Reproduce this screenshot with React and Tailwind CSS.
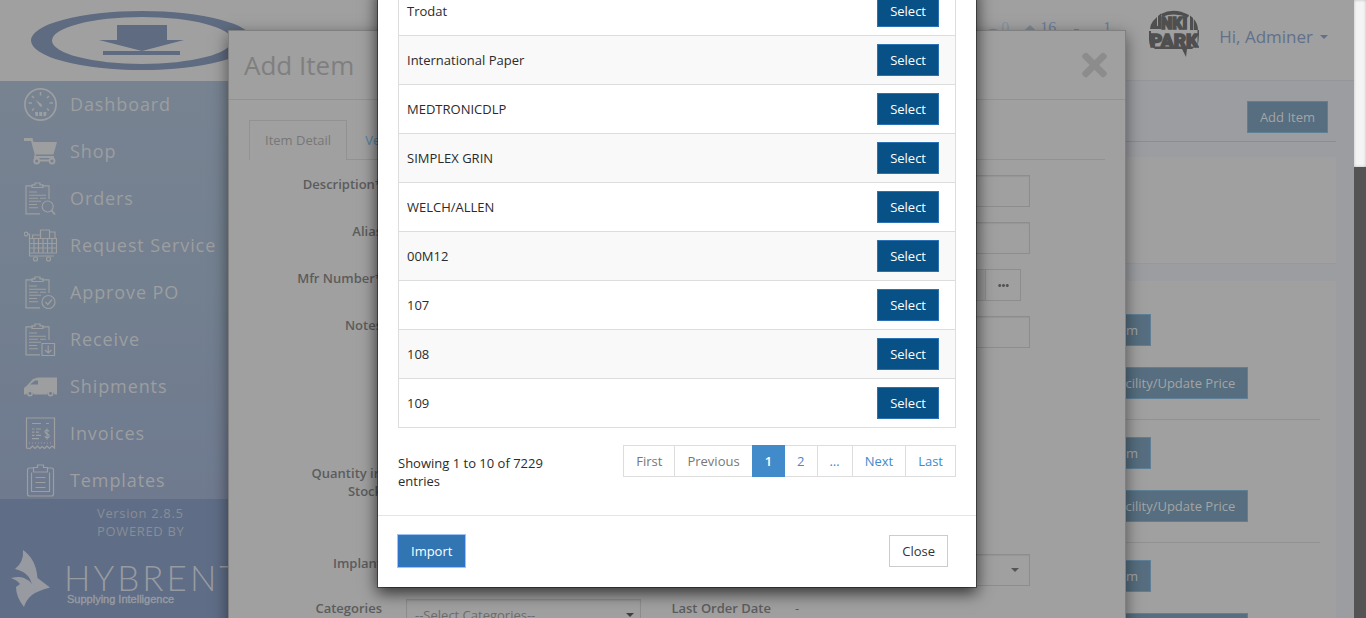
import React from "react";
import { FaTimes, FaEye, FaEllipsisH } from "react-icons/fa";

function Icon({ children }) {
  return (
    <svg
      viewBox="0 0 33 33"
      className="size-[33px] shrink-0"
      fill="none"
      stroke="currentColor"
      strokeWidth="1.2"
      aria-hidden="true"
    >
      {children}
    </svg>
  );
}

const DashboardIcon = () => (
  <Icon>
    <circle cx="16.5" cy="16.5" r="15.6" strokeWidth="1.7" />
    <path d="M16.5 4v3.5M4.500 15h3.500M25.500 15H29M8 8l2 2M25 8l-2 2M8 22.500l2-2M25 22.500l-2-2" strokeWidth="1.5" />
    <path d="M11.500 12l6 4 .800 2.500-2 .300z" fill="currentColor" stroke="none" />
    <path d="M11 24h3v4h-2.500zM15.200 24h3v4h-3zM19.500 24h3l-.500 4H19.500z" fill="currentColor" stroke="none" />
  </Icon>
);

const ShopIcon = () => (
  <Icon>
    <path d="M0 3h8.500l1 4H33l-3.500 12.500H12.200L11.800 21H30v2H9.800l.900-3.500L7 6H0z" fill="currentColor" stroke="none" />
    <path d="M14 25.500h12" strokeWidth="2" />
    <circle cx="12.700" cy="26" r="2.500" strokeWidth="1.900" />
    <circle cx="28" cy="26" r="2.500" strokeWidth="1.900" />
  </Icon>
);

const Clipboard = () => (
  <>
    <path d="M8.500 3.800H2v28h14M18 3.800h7V17" />
    <path d="M8 5.500V2.800h3V1h5v1.800h3v2.700z" />
    <path d="M5 10h8M5 13.200h17M5 16.200h9M16 16.200h6M5 19.200h12M5 22.500h8M5 25.800h9" strokeWidth="1.1" />
  </>
);

const OrdersIcon = () => (
  <Icon>
    <Clipboard />
    <circle cx="23.700" cy="24.500" r="5.500" />
    <path d="M27.500 28.500l3.500 4" strokeWidth="1.700" />
  </Icon>
);

const RequestIcon = () => (
  <Icon>
    <circle cx="2" cy="5" r="1.800" />
    <path d="M4 5h1.500v22H30" />
    <path d="M5.500 9.500h27v14.500h-27M5.500 14.500h27M5.500 19h27M10 9.500V24M14.500 9.500V24M19 9.500V24M23.500 9.500V24M28 9.500V24" />
    <path d="M8.500 9.500V6h7.500M16.500 9.500V1h9v8.500M25.500 3h5.500v6.500" />
    <circle cx="11.500" cy="30" r="2" />
    <circle cx="24.500" cy="30" r="2" />
  </Icon>
);

const ApproveIcon = () => (
  <Icon>
    <Clipboard />
    <circle cx="24.500" cy="26" r="6.500" />
    <path d="M21.500 26l2.300 2.500L28 23.500" />
  </Icon>
);

const ReceiveIcon = () => (
  <Icon>
    <Clipboard />
    <path d="M18 20.500h12.500V32.500H18zM24.200 22.500v7.500M21 27l3.200 3 3.300-3" />
  </Icon>
);

const ShipmentsIcon = () => (
  <Icon>
    <path
      d="M16 7.500h17v17h-2.500a3.800 3.800 0 0 0-7.400 0H9.800a3.800 3.800 0 0 0-7.300 0H0v-6.500l3-2.500 6-6.500 5-1.500zM6 14.500h8v-4h-3z"
      fill="currentColor"
      stroke="none"
      fillRule="evenodd"
    />
    <circle cx="6" cy="23.500" r="2.200" strokeWidth="1.500" />
    <circle cx="26.500" cy="23.500" r="2.200" strokeWidth="1.500" />
  </Icon>
);

const InvoicesIcon = () => (
  <Icon>
    <path d="M2.500 31V1h28v30l-2.500-2-2.500 2.500-2.500-2.500-2.500 2.500-2.500-2-2 2-2.500-2.500-2.500 2.500-2.500-2.500-2.500 2.500z" />
    <path d="M8 6.500h9M22 6.500h3M8 12h2.500M12 12h5M8 15.200h2.500M12 15.200h3M8 18.400h2.500M12 18.400h5M8 21.600h7" />
    <path d="M25 14.500q-.500-1.500-2-1.500-2 0-2 1.800 0 1.500 2 2 2.200.500 2.200 2.200 0 1.800-2.200 1.800-1.800 0-2.200-1.600M23 11.500v11" />
    <path d="M5 26h23" strokeDasharray="1 2" />
  </Icon>
);

const TemplatesIcon = () => (
  <Icon>
    <path d="M9.500 4H5.500Q3.500 4 3.500 6v24q0 2 2 2h22q2 0 2-2V6q0-2-2-2h-4.500" />
    <path d="M9.500 8V3.500h4V1h6v2.500h4V8z" />
    <path d="M7.500 8.500V27.500h18V8.500M11.500 13.500h10M11.500 18.500h10M11.500 23.500h10" />
  </Icon>
);

const NAV = [
  ["Dashboard", DashboardIcon],
  ["Shop", ShopIcon],
  ["Orders", OrdersIcon],
  ["Request Service", RequestIcon],
  ["Approve PO", ApproveIcon],
  ["Receive", ReceiveIcon],
  ["Shipments", ShipmentsIcon],
  ["Invoices", InvoicesIcon],
  ["Templates", TemplatesIcon],
];

const VENDORS = [
  "Trodat",
  "International Paper",
  "MEDTRONICDLP",
  "SIMPLEX GRIN",
  "WELCH/ALLEN",
  "00M12",
  "107",
  "108",
  "109",
];

function Caret({ className }) {
  return (
    <svg viewBox="0 0 8 4" className={className} aria-hidden="true">
      <path d="M0 0h8L4 4z" fill="currentColor" />
    </svg>
  );
}

function Sidebar() {
  return (
    <aside className="flex w-[250px] shrink-0 flex-col bg-[#5f6d86] text-[#9c9ea0]">
      <div className="h-[81px] shrink-0 bg-[#a0a0a0] pt-[11px] pl-[31px]">
        <svg viewBox="0 0 222 59" className="h-[59px] w-[222px]" role="img" aria-label="Company logo">
          <path
            fillRule="evenodd"
            fill="#5f6b80"
            d="M111 0a111 29.500 0 1 0 0 59a111 29.500 0 1 0 0-59zM111 6a90 23.500 0 1 1 0 47a90 23.500 0 1 1 0-47z"
          />
          <path fill="#5f6b80" d="M86 14h50v15h17l-42 11-43-11h18zM72 40h77v4H72z" />
        </svg>
      </div>
      <nav className="shrink-0 bg-linear-to-b from-[#788392] via-[#73808f] to-[#6f7a8f]">
        {NAV.map(([label, Glyph], i) => (
          <a
            key={label}
            href="#"
            className={
              i === NAV.length - 1
                ? "flex h-[42px] items-start gap-[13px] overflow-visible pt-[7px] pl-6 text-lg leading-8 tracking-wider"
                : "flex h-[47px] items-start gap-[13px] pt-[7px] pl-6 text-lg leading-8 tracking-wider"
            }
          >
            <Glyph />
            {label}
          </a>
        ))}
      </nav>
      <div className="flex flex-col pt-[5px]">
        <p className="pl-[97px] text-[13px] leading-[18px] tracking-wider text-[#888d96]">
          Version 2.8.5
          <br />
          POWERED BY
        </p>
        <svg viewBox="0 0 250 64" className="mt-[9px] h-16 w-[250px]" fill="#979ba1" aria-label="Hybrent">
          <path d="M23 1q13 9 14.500 28l12.500 9.500q-13 3.500-18 7.500-6 5-8 12-8-10-8-20l4-3q-3-4-9-6 8-2 13 0 5 2 8 6-3-9-9-12-4-2-8-3 9-7 8-19z" />
          <text x="64" y="42" fontFamily="Lato" fontWeight="300" fontSize="35" letterSpacing="3">
            HYBRENT
          </text>
          <text x="67" y="54" fontFamily="Liberation Sans" fontSize="11" stroke="#979ba1" strokeWidth="0.4">
            Supplying Intelligence
          </text>
        </svg>
      </div>
    </aside>
  );
}

function BandLogo() {
  return (
    <svg viewBox="0 0 50 48" className="h-12 w-[50px]" role="img" aria-label="Profile picture">
      <g fill="#4f4f4f">
        <path d="M4 11l4-4v9h2v3H1q0-4 3-8zM9 6l3-2.500V19H9zM41 5.500l3 2.500V20h-3zM44.700 9q4 4 4.300 11h-4.300z" />
        <path d="M12 4Q25-3 40 5l-1 2.500Q25 2 13 7z" />
        <path d="M0 21h2v16Q0 34 0 30zM48.500 20h1.500q0 11-1.500 16zM3 36.500h43l-3 2.500h-5l-1 8-4-8H6z" />
      </g>
      <g fill="#4f4f4f" stroke="#4f4f4f" strokeWidth="1.4" fontFamily="Roboto" fontWeight="900">
        <text x="12" y="19" fontSize="16">NKI</text>
        <text x="1" y="37" fontSize="19">PARK</text>
      </g>
    </svg>
  );
}

function PageButton({ children }) {
  return (
    <button
      type="button"
      className="h-8 border border-[#5f7f96] bg-[#566e7f] px-3 text-[13px] leading-[18px] font-medium text-[#a3a5a6]"
    >
      {children}
    </button>
  );
}

function Page() {
  return (
    <div className="flex h-full overflow-hidden bg-[#9b9da1]">
      <Sidebar />
      <div className="flex min-w-0 flex-1 flex-col">
        <header className="flex h-[81px] shrink-0 items-start justify-end border-b border-[#949699] bg-[#a0a0a0] pr-[26px]">
          <div className="flex gap-[14px] pt-5 font-['Liberation_Serif',serif] text-base leading-4 text-[#6b7c98]">
            <span className="flex text-[#8595a0]">
              <FaEye className="mt-[6px] size-4 text-[#7d8894]" />
              0
            </span>
            <span className="flex gap-[3px]">
              <svg viewBox="0 0 14 12" className="mt-[5px] h-3 w-3.5 text-[#7d8894]" aria-hidden="true">
                <path d="M7 0l7 6.500h-2V12H2V6.500H0z" fill="currentColor" />
              </svg>
              16
            </span>
            <span className="flex gap-1.5">
              <svg viewBox="0 0 23 14" className="mt-[9px] ml-1 h-3.5 w-[23px]" aria-hidden="true">
                <path d="M0 0h4.500l1 1.500H23L21 9H7.500L5 2H0z" fill="currentColor" />
              </svg>
              1
            </span>
          </div>
          <div className="mt-2.5 ml-[38px]">
            <BandLogo />
          </div>
          <button type="button" className="mt-[25px] ml-5 flex items-center gap-[7px] text-[17px] leading-6 text-[#62708a]">
            Hi, Adminer
            <Caret className="h-1 w-2" />
          </button>
        </header>
        <main className="flex flex-1 flex-col pr-[18px] pl-[18px]">
          <div className="flex shrink-0 justify-end border-b border-[#8b8d8f] pt-5 pr-2 pb-2">
            <PageButton>Add Item</PageButton>
          </div>
          <section className="mt-[15px] h-[107px] shrink-0 border-b border-[#979899] bg-[#a0a0a0]" />
          <section className="mt-[17px] flex-1 bg-[#a0a0a0] px-4 pt-[33px]">
            {[0, 1, 2].map((n) => (
              <div key={n} className="mb-[17px] border-b border-[#919191] pr-16 pb-5">
                <div className="ml-auto flex w-[185px] flex-col items-start gap-[21px]">
                  <PageButton>Edit Item</PageButton>
                  <PageButton>Add Facility/Update Price</PageButton>
                </div>
              </div>
            ))}
          </section>
        </main>
      </div>
    </div>
  );
}

const labelClass = "text-right text-[13px] leading-[18px] font-semibold text-[#5c5c5c]";
const fieldClass = "h-8 w-full border border-[#8d8d8d] bg-[#a0a0a0] px-2 shadow-[inset_0_1px_1px_rgba(0,0,0,0.06)]";

function ItemModal() {
  return (
    <div role="dialog" aria-label="Add Item" className="w-full max-w-[898px] shrink-0 border border-[#808080] bg-[#a0a0a0] shadow-[0_5px_15px_rgba(0,0,0,0.5)]">
      <div className="flex h-[69px] items-center justify-between border-b border-[#929292] pr-[18px] pl-[15px]">
        <h2 className="text-[26px] leading-9 text-[#7f7f7f]">Add Item</h2>
        <button type="button" aria-label="Close item form" className="text-[#8c8c8c]">
          <FaTimes className="h-9 w-[25px]" />
        </button>
      </div>
      <div className="px-5 pt-5">
        <div className="flex border-b border-[#929292]">
          <a href="#" className="-mb-px border border-b-0 border-[#929292] bg-[#a0a0a0] px-[15px] pt-2.5 pb-[11px] text-[13px] leading-[18px] text-[#777777]">
            Item Detail
          </a>
          <a href="#" className="ml-[2px] px-4 pt-[11px] text-[13px] leading-[18px] text-[#5580a0]">
            Vendors
          </a>
        </div>
        <form className="grid grid-cols-[133px_1fr_106px_1fr] gap-x-6 gap-y-[15px] pt-[15px] pr-[75px]">
          <label htmlFor="description" className={labelClass}>Description*</label>
          <div className="col-span-3"><input id="description" className={fieldClass} /></div>
          <label htmlFor="alias" className={labelClass}>Alias</label>
          <div className="col-span-3"><input id="alias" className={fieldClass} /></div>
          <label htmlFor="mfr" className={labelClass}>Mfr Number*</label>
          <div className="col-span-3 flex pr-[9px]">
            <input id="mfr" readOnly className="h-8 min-w-0 flex-1 border border-r-0 border-[#8d8d8d] bg-[#989898] px-2" />
            <button type="button" aria-label="Choose manufacturer" className="flex h-8 w-9 items-center justify-center border border-[#8d8d8d] text-[#555555]">
              <FaEllipsisH className="size-[11px]" />
            </button>
          </div>
          <label htmlFor="notes" className={labelClass}>Notes</label>
          <div className="col-span-3 pb-[101px]"><input id="notes" className={fieldClass} /></div>
          <label htmlFor="quantity" className={labelClass + " pb-[39px] pl-14"}>Quantity in Stock</label>
          <div className="col-span-3"><input id="quantity" className={fieldClass + " max-w-[235px]"} /></div>
          <label htmlFor="implant" className={labelClass}>Implant</label>
          <div className="h-[30px]"><input id="implant" type="checkbox" /></div>
          <span />
          <div className="relative h-[30px]">
            <select aria-label="Item type" className={fieldClass + " appearance-none"} />
            <Caret className="pointer-events-none absolute top-3.5 right-[11px] h-1 w-2 text-[#555555]" />
          </div>
          <label htmlFor="categories" className={labelClass}>Categories</label>
          <div className="relative">
            <select id="categories" className={fieldClass + " appearance-none px-1.5 text-[13px] leading-[18px] text-[#6c6c6c]"}>
              <option>--Select Categories--</option>
            </select>
            <Caret className="pointer-events-none absolute top-3.5 right-[7px] h-1 w-2 text-[#404040]" />
          </div>
          <span className={labelClass}>Last Order Date</span>
          <span className="text-[13px] leading-[18px] text-[#5c5c5c]">-</span>
        </form>
      </div>
    </div>
  );
}

function Pager() {
  const base = "-ml-px h-8 border px-3 text-[13px] leading-[18px]";
  const muted = base + " border-[#dddddd] text-[#777777]";
  const link = base + " border-[#dddddd] text-[#428bca]";
  return (
    <div className="flex pl-px">
      <button type="button" className={muted}>First</button>
      <button type="button" className={muted}>Previous</button>
      <button type="button" className={base + " relative border-[#428bca] bg-[#428bca] font-semibold text-white"}>1</button>
      <button type="button" className={link}>2</button>
      <button type="button" className={link}>…</button>
      <button type="button" className={link}>Next</button>
      <button type="button" className={link}>Last</button>
    </div>
  );
}

function VendorModal() {
  return (
    <div role="dialog" aria-label="Select manufacturer" className="w-full max-w-[600px] shrink-0 border border-black/40 bg-white bg-clip-padding text-[13px] leading-[18px] text-[#2b2b2b] shadow-[0_5px_15px_rgba(0,0,0,0.7)]">
      <div className="px-5 pb-[37px]">
        <table className="w-full border-collapse border border-[#dddddd]">
          <tbody>
            {VENDORS.map((name) => (
              <tr key={name} className="border-t border-[#dddddd] even:bg-[#f9f9f9]">
                <td className="py-2 pl-2">{name}</td>
                <td className="w-[78px] py-2 pr-4">
                  <button type="button" className="block h-8 border border-[#2a72b5] bg-[#085186] px-3 font-medium text-white">
                    Select
                  </button>
                </td>
              </tr>
            ))}
          </tbody>
        </table>
        <div className="mt-[17px] flex items-start justify-between">
          <p className="-mb-3 w-[180px] pt-[9px]">Showing 1 to 10 of 7229 entries</p>
          <Pager />
        </div>
      </div>
      <div className="flex justify-between border-t border-[#e5e5e5] pt-[19px] pr-7 pb-5 pl-5">
        <button type="button" className="h-8 border border-[#2f74c8] bg-[#3176b3] px-3 font-medium text-white outline outline-[#9fc2f5]">
          Import
        </button>
        <button type="button" className="h-8 border border-[#cccccc] bg-white px-3 text-[#333333]">
          Close
        </button>
      </div>
    </div>
  );
}

export default function App() {
  return (
    <div className="flex h-screen overflow-hidden font-['Open_Sans','Noto_Sans',sans-serif]">
      <div className="relative min-w-0 flex-1 overflow-hidden">
        <Page />
        <div className="absolute inset-0 flex items-start justify-center overflow-hidden pt-[30px]">
          <ItemModal />
        </div>
        <div className="absolute inset-0 flex items-end justify-center overflow-hidden pb-[30px]">
          <VendorModal />
        </div>
      </div>
      <div className="w-3 shrink-0 bg-[#545454]">
        <div className="h-[27%] bg-[#f4f4f4] shadow-[inset_0_0_3px_rgba(0,0,0,0.25)]" />
      </div>
    </div>
  );
}
